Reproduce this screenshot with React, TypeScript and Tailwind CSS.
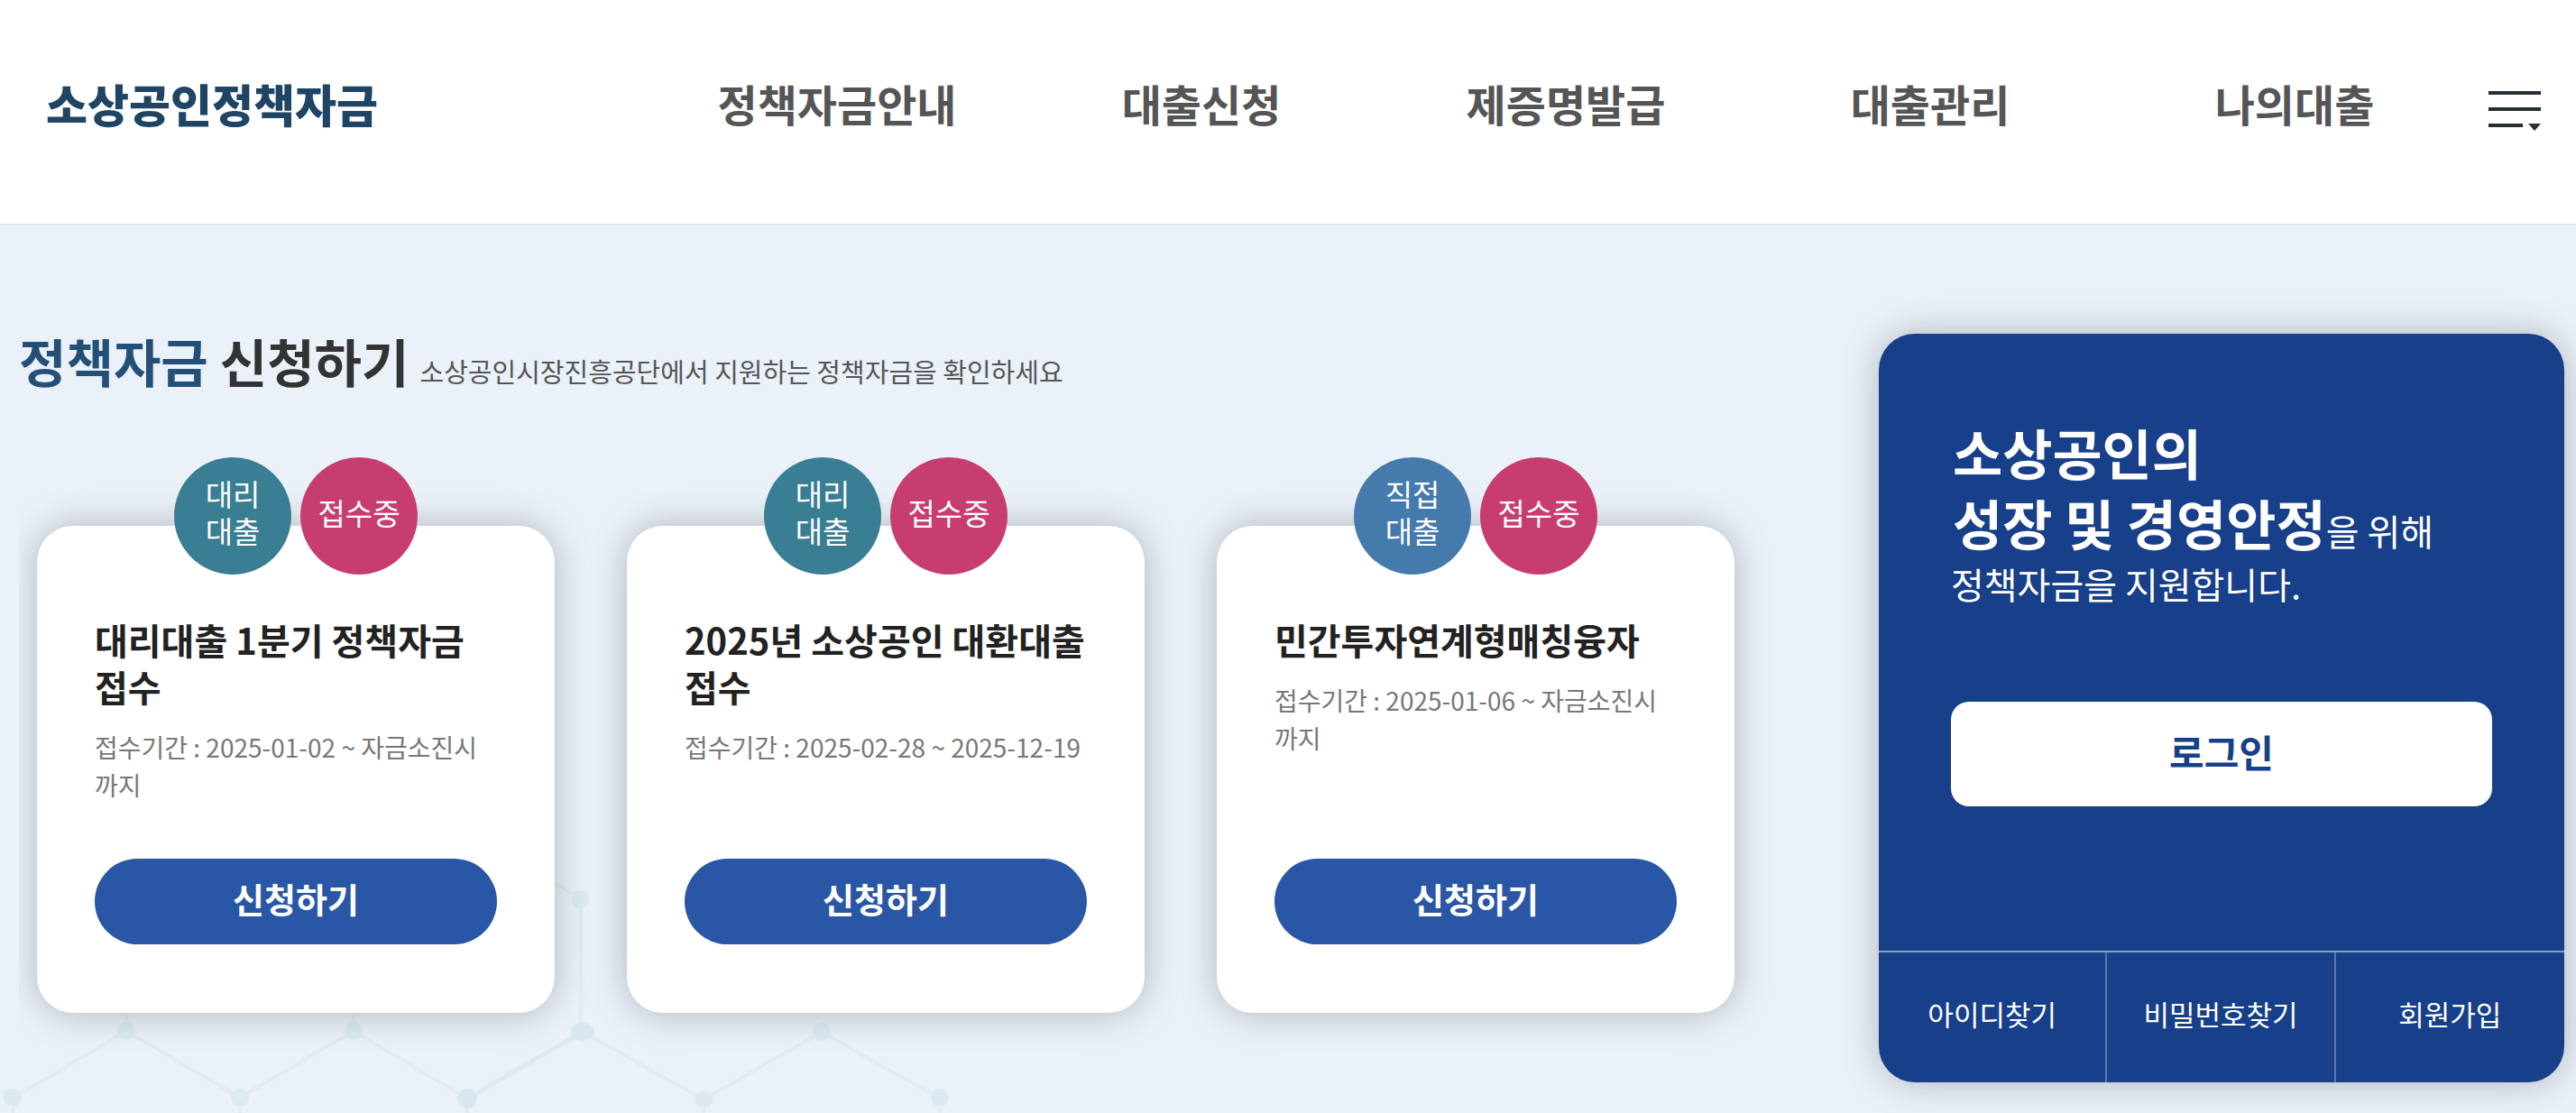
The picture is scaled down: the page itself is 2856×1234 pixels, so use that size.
import clsx from "clsx";

type Loan = {
	kind: [string, string];
	direct?: boolean;
	title: string;
	period: string;
};

const menus = ["정책자금안내", "대출신청", "제증명발급", "대출관리", "나의대출"];

const loans: Loan[] = [
	{ kind: ["대리", "대출"], title: "대리대출 1분기 정책자금 접수", period: "2025-01-02 ~ 자금소진시까지" },
	{ kind: ["대리", "대출"], title: "2025년 소상공인 대환대출 접수", period: "2025-02-28 ~ 2025-12-19" },
	{ kind: ["직접", "대출"], direct: true, title: "민간투자연계형매칭융자", period: "2025-01-06 ~ 자금소진시까지" },
];

const memberLinks = ["아이디찾기", "비밀번호찾기", "회원가입"];

function Header() {
	return (
		<header className="flex h-[250px] border-b-2 border-[#e5e8eb] bg-white pr-[38px] pl-[51px]">
			<h1 className="w-[675px] pt-[78px] text-[50px] leading-[72px] font-black text-[#1f4464]">
				<a href="#">소상공인정책자금</a>
			</h1>
			<nav className="flex-1 pt-[78px]">
				<ul className="grid grid-cols-5 text-center text-[48px] leading-[72px] font-bold text-[#555]">
					{menus.map((menu) => (
						<li key={menu}><a href="#">{menu}</a></li>
					))}
				</ul>
			</nav>
			<button className="mt-[100px] ml-[13px] h-12 w-[59px]" type="button" aria-label="전체메뉴">
				<svg className="block" width="59" height="48" viewBox="0 0 59 48" fill="#252f38">
					<rect x="0" y="1" width="58" height="4" />
					<rect x="0" y="19" width="58" height="4" />
					<rect x="0" y="37" width="38" height="4" />
					<path d="M44 37h14l-7 8z" />
				</svg>
			</button>
		</header>
	)
}

// Faint molecule pattern along the bottom left of the section
function Molecules() {
	return (
		<svg className="absolute bottom-0 left-0" width="1060" height="274" viewBox="0 960 1060 274" aria-hidden="true">
			<g fill="none" stroke="#e2ebf2" strokeWidth="4">
				<path d="M3 1210L14 1218L140 1143L266 1217L392 1143L518 1218" />
				<path d="M646 1144L780 1219L911 1144L1042 1218" />
				<path d="M140 1143V1060M392 1143V1060M644 1144V997L600 970" />
				<path d="M14 1218V1234M266 1217V1234M518 1218V1234M780 1219V1234M1042 1218V1234" />
				<path d="M518 1218L646 1144" stroke="#dceaf0" strokeWidth="5" />
			</g>
			<g fill="#dde9f1">
				<circle cx="14" cy="1217" r="10" />
				<circle cx="140" cy="1143" r="10" />
				<circle cx="266" cy="1217" r="10" />
				<circle cx="392" cy="1143" r="10" />
				<circle cx="643" cy="997" r="10" />
				<circle cx="780" cy="1219" r="10" />
				<circle cx="911" cy="1144" r="10" />
				<circle cx="1042" cy="1217" r="10" />
			</g>
			<g fill="#d8e7ee">
				<circle cx="518" cy="1218" r="11" />
				<ellipse cx="646" cy="1144" rx="13" ry="10" />
			</g>
		</svg>
	)
}

function LoanCard({ loan }: { loan: Loan }) {
	return (
		<li className="flex flex-col rounded-[40px] bg-white px-16 pb-[76px] shadow-[0_0_40px_rgba(0,0,0,0.25)]">
			<div className="-mt-[76px] flex justify-center gap-[10px] text-center text-[33px] leading-[41px] text-white">
				<span className={clsx("flex size-[130px] flex-col items-center justify-center rounded-full pb-2", loan.direct ? "bg-[#457aad]" : "bg-[#3a7e94]")}>
					<span>{loan.kind[0]}</span>
					<span>{loan.kind[1]}</span>
				</span>
				<span className="flex size-[130px] items-center justify-center rounded-full bg-[#c83d70] pb-2">접수중</span>
			</div>
			<h3 className="mt-[46px] text-[40px] leading-[52px] font-bold text-[#222]">{loan.title}</h3>
			<p className="mt-5 text-[28px] leading-[42px] text-[#777]">{`접수기간 : ${loan.period}`}</p>
			<div className="mt-auto pt-[61px]">
				<button className="block h-[95px] w-full rounded-full bg-[#2a57a5] pb-2 text-[38px] font-bold text-white" type="button">신청하기</button>
			</div>
		</li>
	)
}

function LoginPanel() {
	return (
		<aside className="flex h-[830px] w-[760px] shrink-0 flex-col overflow-hidden rounded-[40px] bg-[#183f89] text-white shadow-[0_0_40px_rgba(0,0,0,0.25)]">
			<div className="flex-1 px-20 pt-[92px]">
				<p className="pl-0.5 text-[60px] leading-[78px] font-bold">
					소상공인의<br />
					성장 및 경영안정<span className="text-[40px] leading-none font-normal">을 위해</span>
				</p>
				<p className="text-[40px] leading-[58px]">정책자금을 지원합니다.</p>
				<button className="mt-[102px] block h-[116px] w-full rounded-[20px] bg-white pb-2 text-[42px] font-bold text-[#183f89]" type="button">로그인</button>
			</div>
			<ul className="grid h-[146px] grid-cols-3 divide-x-2 divide-white/30 border-t-2 border-white/50 text-[31px]">
				{memberLinks.map((link) => (
					<li key={link}><a className="flex h-full items-center justify-center pb-2" href="#">{link}</a></li>
				))}
			</ul>
		</aside>
	)
}

export default function App() {
	return (
		<div className="flex min-h-screen flex-col font-['Noto_Sans_CJK_KR',sans-serif]">
			<Header />
			<main className="relative flex flex-1 items-start overflow-hidden bg-[#eaf1f9] pr-[13px] pl-[21px]">
				<Molecules />
				<section className="relative min-w-0 flex-1 pt-[107px]">
					<div className="flex items-baseline gap-3">
						<h2 className="text-[57px] leading-[84px] font-bold text-[#333]">
							<span className="text-[#245078]">정책자금</span> 신청하기
						</h2>
						<p className="text-[29px] text-[#555]">소상공인시장진흥공단에서 지원하는 정책자금을 확인하세요</p>
					</div>
					<ul className="grid grid-cols-3 gap-20 overflow-hidden pt-[142px] pr-20 pb-20 pl-5">
						{loans.map((loan) => (
							<LoanCard key={loan.title} loan={loan} />
						))}
					</ul>
				</section>
				<div className="relative mt-[120px] ml-20">
					<LoginPanel />
				</div>
			</main>
		</div>
	)
}
